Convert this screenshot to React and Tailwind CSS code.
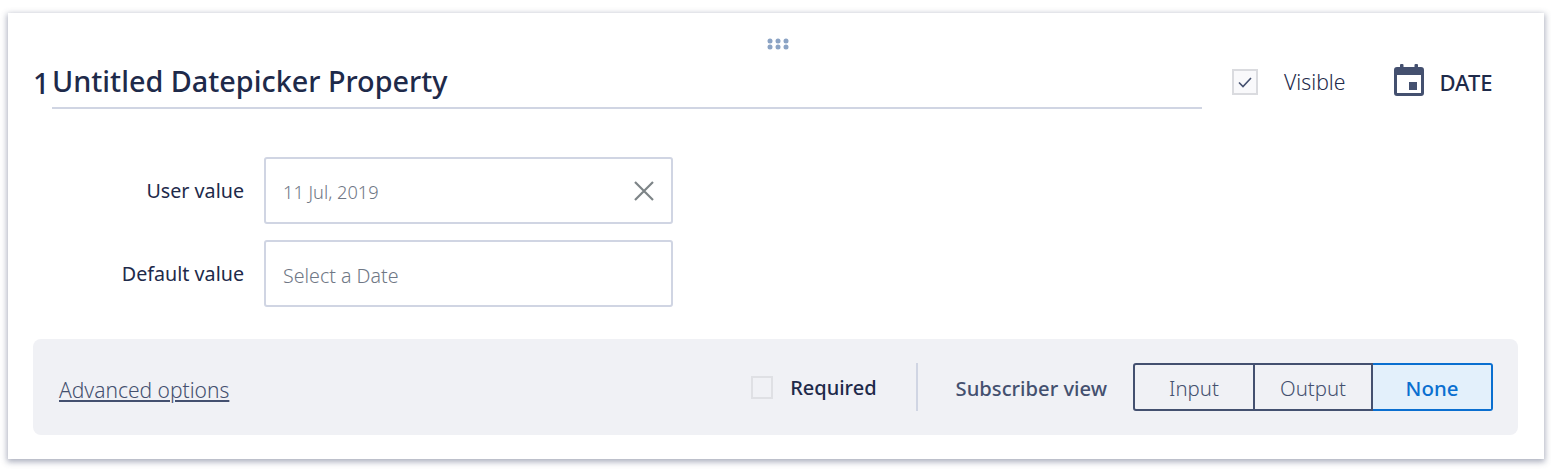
function DragDots() {
  return (
    <svg width="22" height="12" viewBox="0 0 22 12" fill="#8ba3c4">
      <circle cx="3" cy="3" r="2.5" />
      <circle cx="11" cy="3" r="2.5" />
      <circle cx="19" cy="3" r="2.5" />
      <circle cx="3" cy="9" r="2.5" />
      <circle cx="11" cy="9" r="2.5" />
      <circle cx="19" cy="9" r="2.5" />
    </svg>
  );
}

function CalendarIcon() {
  return (
    <svg width="30" height="32" viewBox="0 0 30 32" fill="#44506f">
      <rect x="6" y="0" width="3.5" height="6" rx="1" />
      <rect x="20.5" y="0" width="3.5" height="6" rx="1" />
      <path
        fillRule="evenodd"
        d="M3 3h24a3 3 0 0 1 3 3v23a3 3 0 0 1-3 3H3a3 3 0 0 1-3-3V6a3 3 0 0 1 3-3zM3 11v18h24V11H3z"
      />
      <rect x="15" y="18" width="8" height="8" />
    </svg>
  );
}

function Field({ label, children }) {
  return (
    <div className="flex items-center">
      <div className="w-[231px] pr-5 text-right text-[19.7px] text-[#1e2a4a]">{label}</div>
      <div className="flex h-[67px] w-[409px] items-center justify-between rounded-[3px] border-2 border-[#d0d5e3] pl-[17px] pr-4 font-light text-[#6f7785]">
        {children}
      </div>
    </div>
  );
}

export default function App() {
  return (
    <div className="h-[471px] w-[1551px] bg-white pl-2 pt-[13px] font-['Noto_Sans',sans-serif]">
      <div className="flex h-[446px] w-[1536px] flex-col bg-white px-[25px] pt-[25px] shadow-[0_2px_6px_1px_rgba(70,80,110,0.45)]">
        <div className="flex justify-center pl-[3px]">
          <DragDots />
        </div>

        <div className="mt-[7px] flex h-[52px] items-start">
          <div className="w-[19px] pt-[8px] text-[28.8px] font-medium leading-[36px] text-[#1e2a4a]">1</div>
          <div className="h-[52px] w-[1150px] border-b-2 border-[#d0d5e3] pt-[6px] text-[28.8px] font-medium leading-[36px] text-[#1e2a4a]">
            Untitled Datepicker Property
          </div>
          <div className="ml-[30px] flex h-[50px] items-center">
            <div className="flex h-[26px] w-[26px] items-center justify-center border-2 border-[#dadbdf] bg-[#f9f9fb]">
              <svg width="16" height="14" viewBox="0 0 16 14" fill="none" stroke="#44506f" strokeWidth="1.6">
                <path d="M2 7.5l4 4L14 3" />
              </svg>
            </div>
            <span className="ml-[26px] text-[21.2px] font-light text-[#1e2a4a]">Visible</span>
            <div className="mb-1 ml-[49px]">
              <CalendarIcon />
            </div>
            <span className="ml-[15px] text-[22px] font-medium text-[#1e2a4a]">DATE</span>
          </div>
        </div>

        <div className="mt-[48px] flex flex-col gap-4">
          <Field label="User value">
            <span className="pt-[5px] text-[18.2px]">11 Jul, 2019</span>
            <svg width="22" height="22" viewBox="0 0 22 22" stroke="#7d8487" strokeWidth="2.2" fill="none">
              <path d="M2 2l18 18M20 2L2 20" />
            </svg>
          </Field>
          <Field label="Default value">
            <span className="pt-[5px] text-[19.6px]">Select a Date</span>
          </Field>
        </div>

        <div className="mt-8 flex h-[96px] w-[1485px] items-center justify-between rounded-lg bg-[#f0f1f5] pl-[26px] pr-[25px]">
          <a className="pt-2 text-[21px] font-light text-[#44506f] underline">Advanced options</a>
          <div className="flex items-center">
            <div className="h-[23px] w-[22px] border-2 border-[#dfe0e4]"></div>
            <span className="ml-[17px] pt-[2px] text-[20px] font-medium text-[#1e2a4a]">Required</span>
            <div className="ml-[39px] h-[48px] w-[2px] bg-[#d0d5e3]"></div>
            <span className="ml-[38px] pt-[2px] text-[20.2px] font-medium text-[#44506f]">Subscriber view</span>
            <div className="ml-[26px] flex h-[48px] w-[360px] text-[20.4px] font-light">
              <div className="flex w-[122px] items-center justify-center rounded-l-[3px] border-2 border-[#44506f] pt-[2px] text-[#44506f]">
                Input
              </div>
              <div className="flex w-[118px] items-center justify-center border-y-2 border-r-2 border-[#44506f] pt-[2px] text-[#44506f]">
                Output
              </div>
              <div className="flex w-[120px] items-center justify-center rounded-r-[3px] border-2 border-l-0 border-[#0a6fd0] bg-[#e3f0fb] pt-[2px] font-medium text-[#0a6fd0]">
                None
              </div>
            </div>
          </div>
        </div>
      </div>
    </div>
  );
}
